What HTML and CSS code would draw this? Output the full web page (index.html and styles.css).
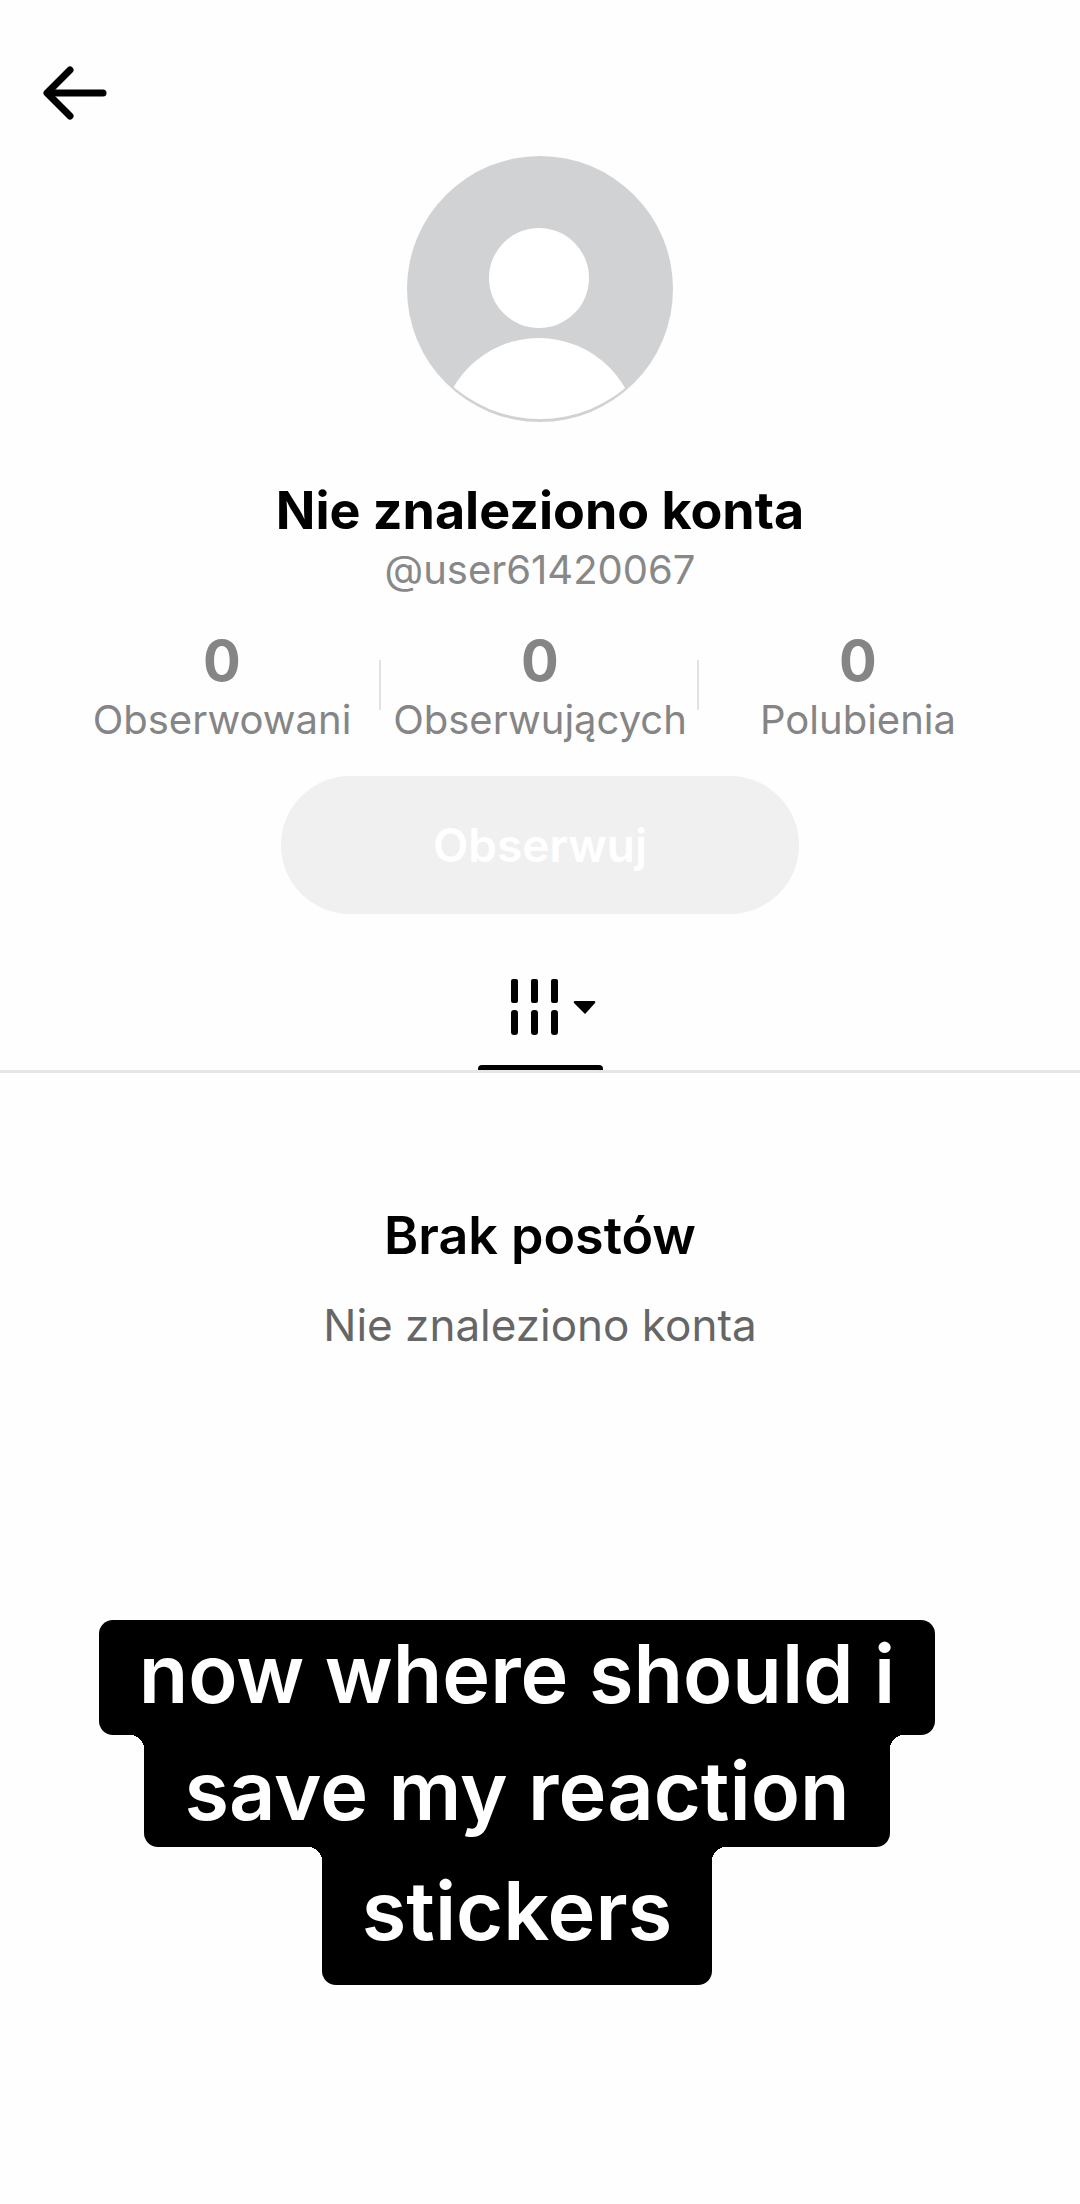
FILE: index.html
```
<!DOCTYPE html>
<html lang="pl">
<head>
  <meta charset="UTF-8" />
  <meta name="viewport" content="width=device-width, initial-scale=1.0"/>
  <title>Nie znaleziono konta</title>
  <link rel="stylesheet" href="styles.css">
</head>
<body>
  <header class="header">
    <button class="back-button" type="button" aria-label="Wstecz">
      <svg width="70" height="56" viewBox="0 0 70 56" fill="none" stroke="#000" stroke-width="7" stroke-linecap="round" stroke-linejoin="round">
        <path d="M31 5 L8 28 L31 51" stroke-width="7"/>
        <path d="M9 28 H64"/>
      </svg>
    </button>
  </header>

  <main>
    <section class="profile">
      <svg class="avatar" viewBox="0 0 266 266" aria-hidden="true">
        <clipPath id="avatarClip"><circle cx="133" cy="130" r="133"/></clipPath>
        <circle cx="133" cy="133" r="133" fill="#d0d2d4"/>
        <circle cx="132" cy="122" r="50" fill="#fff"/>
        <circle cx="132" cy="281" r="99" fill="#fff" clip-path="url(#avatarClip)"/>
      </svg>
      <h1 class="name">Nie znaleziono konta</h1>
      <p class="username">@user61420067</p>

      <div class="stats">
        <div class="stat"><strong>0</strong><span>Obserwowani</span></div>
        <div class="stat"><strong>0</strong><span>Obserwujących</span></div>
        <div class="stat"><strong>0</strong><span>Polubienia</span></div>
      </div>

      <button class="follow-button" type="button" disabled>Obserwuj</button>
    </section>

    <nav class="tabs">
      <button class="tab active" type="button" aria-label="Posty">
        <svg width="86" height="56" viewBox="0 0 86 56">
          <g fill="#000">
            <rect x="0" y="0" width="7" height="24" rx="2"/>
            <rect x="20" y="0" width="7" height="24" rx="2"/>
            <rect x="40" y="0" width="7" height="24" rx="2"/>
            <rect x="0" y="31" width="7" height="25" rx="3"/>
            <rect x="20" y="31" width="7" height="25" rx="3"/>
            <rect x="40" y="31" width="7" height="25" rx="3"/>
            <path d="M64 22 H83 Q85 22 84 24 L75 34 L74 35 L73 34 L63 24 Q62 22 64 22Z"/>
          </g>
        </svg>
      </button>
    </nav>

    <section class="empty">
      <h2>Brak postów</h2>
      <p>Nie znaleziono konta</p>
    </section>

    <div class="caption">
      <span class="line first">now where should i</span>
      <span class="line second">save my reaction</span>
      <span class="line third">stickers</span>
    </div>
  </main>
</body>
</html>
```

FILE: styles.css
```
* {
  box-sizing: border-box;
}
body {
  font-family: Inter, "Liberation Sans", sans-serif;
  margin: 0;
  background-color: #fefefe;
  color: #000;
}
h1, h2, p {
  margin: 0;
}
button {
  font-family: inherit;
  border: none;
  background: none;
  padding: 0;
}
svg {
  display: block;
}
.header {
  padding: 65px 39px 35px;
}
.back-button {
  display: block;
}
.profile {
  display: flex;
  flex-direction: column;
  align-items: center;
}
.avatar {
  width: 266px;
  height: 266px;
}
.name {
  margin-top: 56px;
  font-size: 52px;
  line-height: 66px;
  font-weight: 700;
}
.username {
  color: #888;
  font-size: 40px;
  line-height: 52px;
}
.stats {
  display: flex;
  align-self: stretch;
  margin: 32px 63px 0;
}
.stat {
  flex: 1;
  display: flex;
  flex-direction: column;
  align-items: center;
  color: #858585;
  font-size: 40px;
  line-height: 52px;
  background: linear-gradient(#e2e2e2, #e2e2e2) no-repeat right 32px / 2px 50px;
}
.stat:last-child {
  background: none;
}
.stat strong {
  font-size: 56px;
  line-height: 66px;
}
.follow-button {
  width: 48%;
  height: 138px;
  margin-top: 30px;
  border-radius: 69px;
  background-color: #f0f0f0;
  color: #fff;
  font-size: 46px;
  font-weight: 600;
}
.tabs {
  display: flex;
  justify-content: center;
  margin-top: 65px;
  border-bottom: 3px solid #e6e6e6;
}
.tab {
  padding: 0 6px 29px 33px;
}
.tab.active::after {
  content: "";
  display: block;
  height: 5px;
  margin: 30px -6px -29px -33px;
  border-radius: 4px 4px 0 0;
  background-color: #000;
}
.empty {
  margin-top: 130px;
  text-align: center;
}
.empty h2 {
  font-size: 52px;
  line-height: 66px;
  font-weight: 600;
}
.empty p {
  margin-top: 28px;
  color: #666;
  font-size: 44px;
  line-height: 56px;
}
/* stepped text bubble */
.caption {
  display: flex;
  flex-direction: column;
  align-items: center;
  margin: 267px 46px 0 0;
}
.line {
  position: relative;
  padding: 0 40px;
  border-radius: 0 0 14px 14px;
  background-color: #000;
  color: #fff;
  font-size: 81px;
  line-height: 112px;
  font-weight: 600;
  white-space: nowrap;
}
.line.first {
  padding-bottom: 7px;
  border-radius: 14px;
  line-height: 108px;
}
.line.third {
  padding-top: 8px;
  padding-bottom: 18px;
}
/* rounded inner corners where a line meets the wider one above */
.line.second::before, .line.second::after,
.line.third::before, .line.third::after {
  content: "";
  position: absolute;
  top: 0;
  width: 14px;
  height: 14px;
}
.line::before {
  right: 100%;
  background: radial-gradient(circle at 0 100%, transparent 14px, #000 14px);
}
.line::after {
  left: 100%;
  background: radial-gradient(circle at 100% 100%, transparent 14px, #000 14px);
}
```
